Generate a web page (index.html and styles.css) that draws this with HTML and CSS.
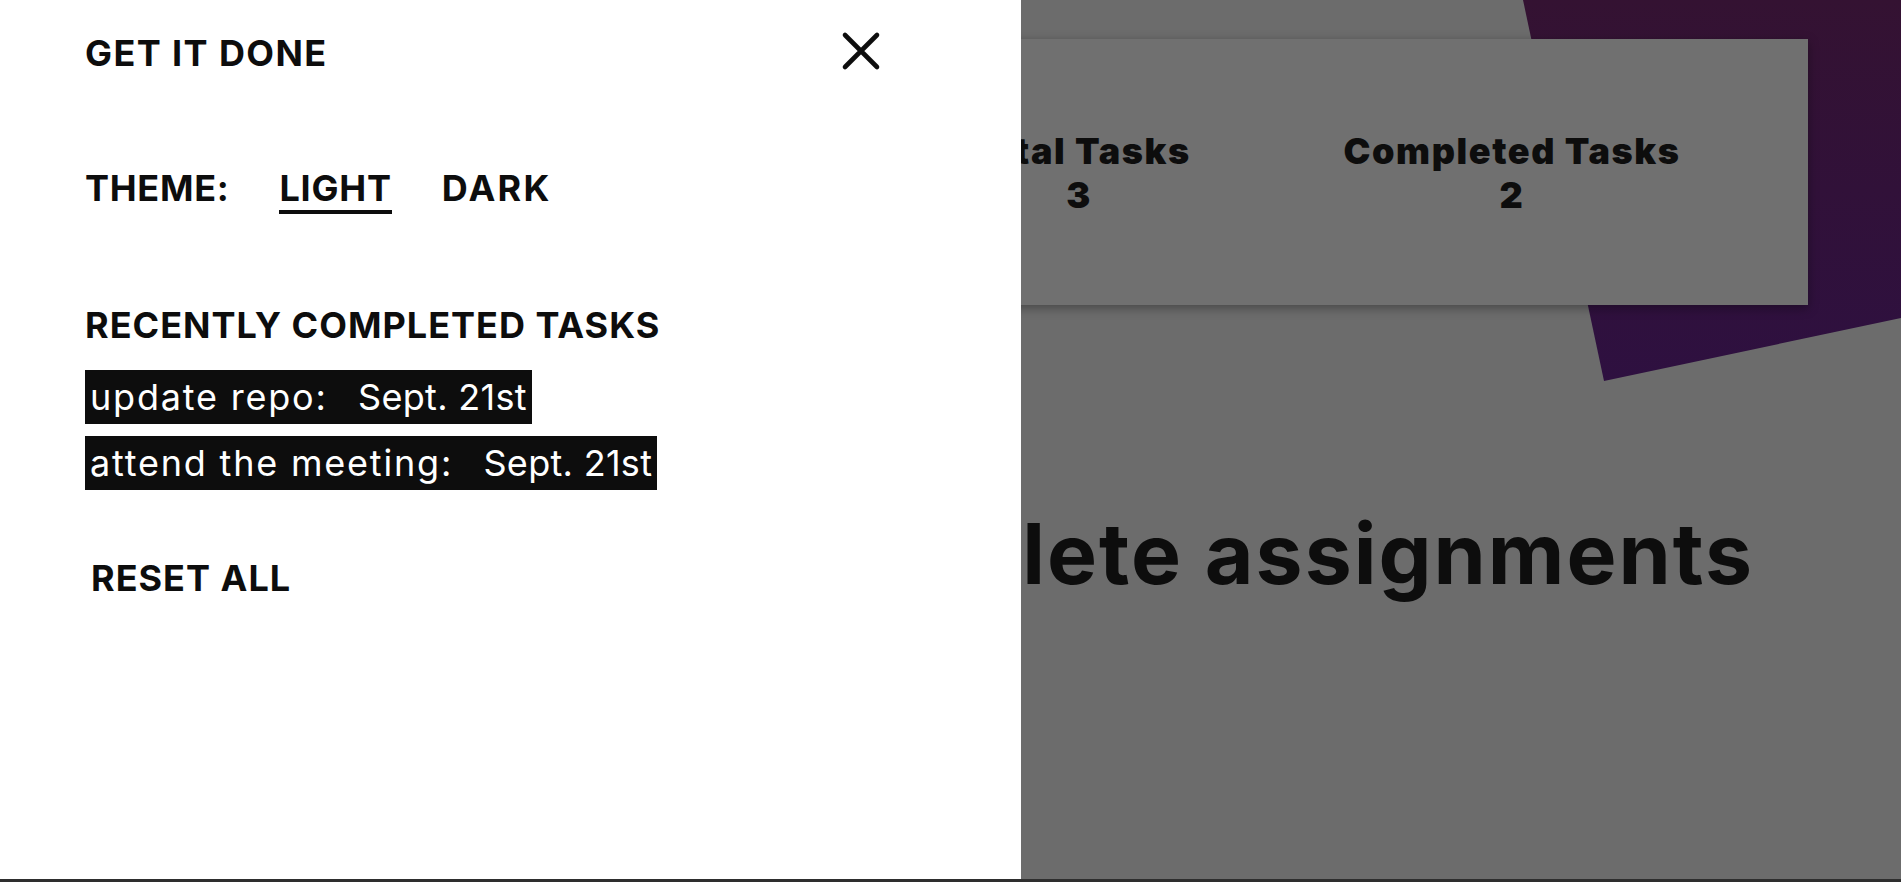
FILE: index.html
```html
<!DOCTYPE html>
<html lang="en">
<head>
<meta charset="utf-8">
<title>Get It Done</title>
<link rel="stylesheet" href="styles.css">
</head>
<body>
<div class="viewport">
  <main class="page">
    <div class="blob"></div>
    <section class="stats-card">
      <div class="stat">
        <h2 class="stat-title">Total Tasks</h2>
        <p class="stat-value">3</p>
      </div>
      <div class="stat">
        <h2 class="stat-title">Completed Tasks</h2>
        <p class="stat-value">2</p>
      </div>
    </section>
    <h1 class="headline">Complete assignments</h1>
  </main>
  <aside class="drawer">
    <div class="drawer-head">
      <span class="brand">GET IT DONE</span>
      <button class="close-btn" aria-label="Close">
        <svg width="40" height="40" viewBox="0 0 40 40"><path d="M4 4 L36 36 M36 4 L4 36" stroke="#0d0d0d" stroke-width="4.6" stroke-linecap="round" fill="none"/></svg>
      </button>
    </div>
    <div class="theme-row">
      <span class="theme-label">THEME:</span>
      <button class="theme-opt active">LIGHT</button>
      <button class="theme-opt">DARK</button>
    </div>
    <h3 class="section-title">RECENTLY COMPLETED TASKS</h3>
    <ul class="done-list">
      <li class="done-item"><span class="task-name">update repo:</span>   <span class="task-date">Sept. 21st</span></li>
      <li class="done-item"><span class="task-name">attend the meeting:</span>   <span class="task-date">Sept. 21st</span></li>
    </ul>
    <button class="reset-btn">RESET ALL</button>
  </aside>
</div>
<div class="bottom-bar"></div>
</body>
</html>
```

FILE: styles.css
```css
* { box-sizing: border-box; margin: 0; padding: 0; }
html, body { width: 1901px; height: 882px; overflow: hidden; }
body {
  font-family: "Inter", "Noto Sans", sans-serif;
  color: #0d0d0d;
  background: #6c6c6c;
  display: flex;
  flex-direction: column;
}
.viewport { position: relative; height: 879px; overflow: hidden; }
.page { position: relative; height: 100%; background: #6c6c6c; padding-top: 39px; }
.blob {
  position: absolute; left: 1523px; top: 0; width: 378px; height: 381px;
  clip-path: polygon(0 0, 100% 0, 100% 318px, 81px 100%);
  background: linear-gradient(180deg, #341232, #2e1040);
}
.stats-card {
  position: relative;
  margin-left: 93px; width: 1715px; height: 266px;
  background: #707070;
  box-shadow: 0 3px 10px rgba(0,0,0,.35);
  display: flex; justify-content: flex-end; align-items: center;
  padding: 2px 116px 0 0; gap: 73px;
}
.stat { width: 360px; text-align: center; font-weight: 900; font-size: 36px; line-height: 44px; letter-spacing: 1.6px; }
.stat-title, .stat-value { font: inherit; }
.headline {
  font-size: 84px; font-weight: 700; line-height: 80px; letter-spacing: 2px;
  text-align: right; padding-right: 147px; margin-top: 209px;
}
.drawer {
  position: absolute; top: 0; left: 0; bottom: 0; width: 1021px;
  background: #fff; padding: 31px 140px 0 85px;
}
.drawer-head { display: flex; justify-content: space-between; align-items: center; height: 44px; }
.brand, .theme-label, .theme-opt, .section-title, .reset-btn {
  font-family: inherit; font-size: 36px; font-weight: 700; line-height: 44px;
  letter-spacing: 1.4px; color: #0d0d0d;
}
.close-btn { width: 40px; height: 40px; border: 0; background: none; display: block; margin-top: -4px; }
.close-btn svg { display: block; }
.theme-row { display: flex; gap: 50px; margin-top: 91px; align-items: flex-start; }
.theme-label { letter-spacing: 0.7px; }
.theme-opt { border: 0; background: none; border-bottom: 4px solid transparent; cursor: pointer; letter-spacing: 0.8px; }
.theme-opt + .theme-opt { letter-spacing: 2.2px; }
.theme-opt.active { border-bottom-color: #0d0d0d; }
.section-title { margin-top: 89px; letter-spacing: 1px; }
.done-list { list-style: none; margin-top: 23px; display: flex; flex-direction: column; align-items: flex-start; gap: 12px; }
.done-item {
  background: #0d0d0d; color: #fff; white-space: pre;
  font-size: 36px; font-weight: 400; line-height: 44px; padding: 5px;
}
.task-name { letter-spacing: 1.8px; }
.task-date { letter-spacing: 0.3px; }
.reset-btn { display: block; margin-top: 66px; border: 0; background: none; padding: 0 6px; cursor: pointer; letter-spacing: 1px; }
.bottom-bar { height: 3px; background: #2e2e2e; }
```
